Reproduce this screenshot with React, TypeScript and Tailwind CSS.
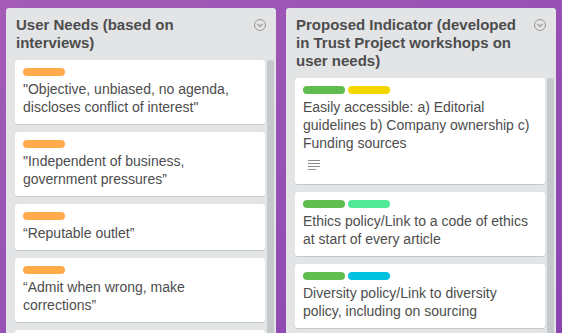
const lists = [
  {
    title: "User Needs (based on interviews)",
    cards: [
      { labels: ["bg-[#ffab4a]"], text: "\"Objective, unbiased, no agenda, discloses conflict of interest\"" },
      { labels: ["bg-[#ffab4a]"], text: "\"Independent of business, government pressures\u201d" },
      { labels: ["bg-[#ffab4a]"], text: "\u201cReputable outlet\u201d" },
      { labels: ["bg-[#ffab4a]"], text: "\u201cAdmit when wrong, make corrections\u201d" },
      { labels: ["bg-[#ffab4a]"], text: "" },
    ],
  },
  {
    title: "Proposed Indicator (developed in Trust Project workshops on user needs)",
    cards: [
      {
        labels: ["bg-[#61bd4f]", "bg-[#f2d600]"],
        text: "Easily accessible: a) Editorial guidelines b) Company ownership c) Funding sources",
        desc: true,
      },
      { labels: ["bg-[#61bd4f]", "bg-[#51e898]"], text: "Ethics policy/Link to a code of ethics at start of every article" },
      { labels: ["bg-[#61bd4f]", "bg-[#00c2e0]"], text: "Diversity policy/Link to diversity policy, including on sourcing" },
    ],
  },
]

function ChevronCircle() {
  return (
    <svg width="12" height="12" viewBox="0 0 12 12" className="ml-auto mt-[3px] shrink-0">
      <circle cx="6" cy="6" r="5.5" fill="none" stroke="#999" strokeWidth="1" />
      <polyline points="3.5,5 6,7.5 8.5,5" fill="none" stroke="#999" strokeWidth="1.1" />
    </svg>
  )
}

function DescIcon() {
  return (
    <svg width="12" height="11" viewBox="0 0 12 11">
      <rect x="0" y="0" width="12" height="1" fill="#8c8c8c" />
      <rect x="0" y="3" width="12" height="1" fill="#8c8c8c" />
      <rect x="0" y="6" width="12" height="1" fill="#8c8c8c" />
      <rect x="0" y="9" width="8" height="1" fill="#8c8c8c" />
    </svg>
  )
}

export default function App() {
  return (
    <div
      className="w-[562px] h-[333px] overflow-hidden flex items-start gap-[10px] pl-[6px] pt-[8px] bg-gradient-to-br from-[#a45cb6] to-[#8c44b2] text-[#4d4d4d]"
      style={{ fontFamily: '"Liberation Sans", Arial, sans-serif' }}
    >
      {lists.map((list, i) => (
        <div key={i} className="w-[270px] h-[340px] shrink-0 bg-[#e2e4e6] rounded-[3px] flex flex-col overflow-hidden">
          {/* Header */}
          <div className="flex items-start px-[10px] pt-[8px] pb-[8px]">
            <h2 className="w-[236px] text-[15px] leading-[18px] font-bold">{list.title}</h2>
            <ChevronCircle />
          </div>

          {/* Cards + scrollbar */}
          <div className="flex flex-1 pl-[9px]">
            <div className="w-[250px] flex flex-col gap-[7px]">
              {list.cards.map((card, j) => (
                <div
                  key={j}
                  className={`bg-white rounded-[3px] border-b border-[#c4c9cc] px-[8px] pt-[8px] ${card.desc ? "pb-[9px]" : "pb-[8px]"}`}
                >
                  <div className="flex gap-[3px] mb-[4px]">
                    {card.labels.map((l, k) => (
                      <span key={k} className={`block w-[42px] h-[8px] rounded-[4px] ${l}`} />
                    ))}
                  </div>
                  {card.text ? (
                    <p className="text-[14px] leading-[18px]">{card.text}</p>
                  ) : (
                    <div className="h-[36px]" />
                  )}
                  {card.desc && (
                    <div className="h-[20px] mt-[3px] flex items-center pl-[5px]">
                      <DescIcon />
                    </div>
                  )}
                </div>
              ))}
            </div>
            <div className="w-[7px] ml-[2px] bg-[#c4c9cc] rounded-t-[3px]" />
          </div>
        </div>
      ))}
    </div>
  )
}
